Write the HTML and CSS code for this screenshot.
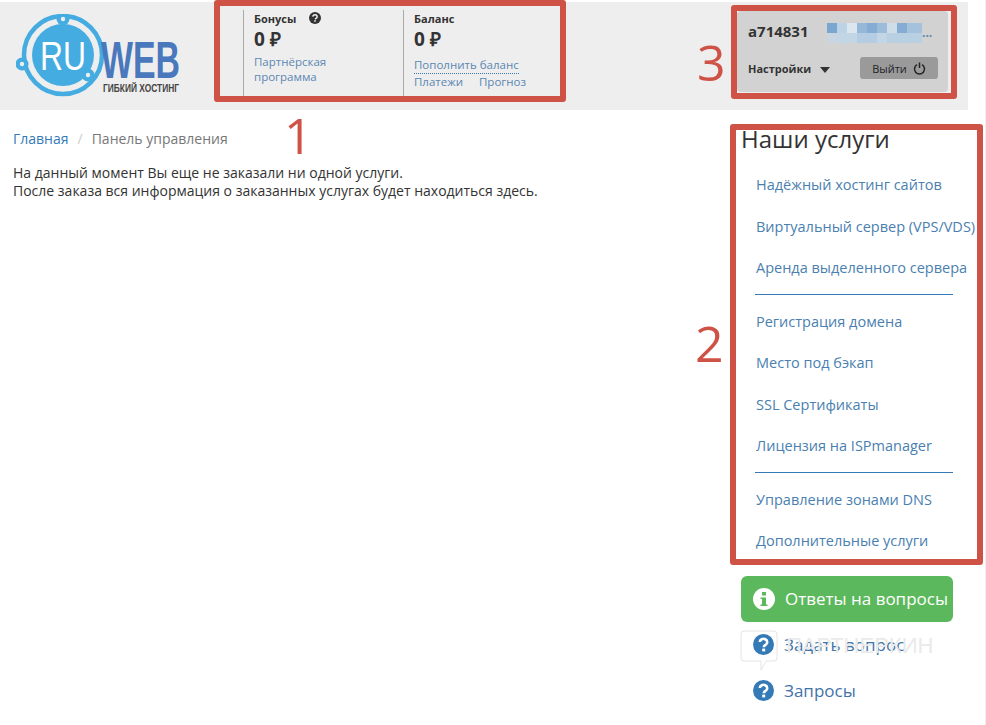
FILE: index.html
```html
<!DOCTYPE html>
<html lang="ru">

<head>
  <meta charset="UTF-8" />
  <title>Панель управления</title>
  <link rel="stylesheet" href="styles.css">
</head>

<body>
  <header class="topbar">
    <a class="logo" href="#">
      <svg width="170" height="84" viewBox="0 0 170 84">
        <circle cx="47" cy="41" r="39" fill="none" stroke="#45ace2" stroke-width="4.5" />
        <circle cx="47" cy="41" r="31" fill="#45ace2" />
        <circle cx="47" cy="5" r="6.5" fill="#45ace2" />
        <circle cx="47" cy="5" r="2.2" fill="#eee" />
        <circle cx="6" cy="50" r="6.5" fill="#45ace2" />
        <circle cx="6" cy="50" r="2.2" fill="#eee" />
        <circle cx="72" cy="61" r="6.5" fill="#45ace2" />
        <circle cx="72" cy="61" r="2.2" fill="#eee" />
        <text x="24" y="56" class="logo-ru" textLength="46" lengthAdjust="spacingAndGlyphs">RU</text>
        <text x="85" y="64" class="logo-web" textLength="79" lengthAdjust="spacingAndGlyphs">WEB</text>
        <text x="87" y="78" class="logo-sub" textLength="76" lengthAdjust="spacingAndGlyphs">ГИБКИЙ ХОСТИНГ</text>
      </svg>
    </a>

    <div class="money">
      <div class="money-col">
        <div class="money-title">Бонусы
          <svg class="hint" width="12" height="12" viewBox="0 0 12 12">
            <circle cx="6" cy="6" r="6" fill="#333" />
            <path d="M3.8 4.6a2.2 1.9 0 1 1 3.3 1.7L6 7" fill="none" stroke="#eee" stroke-width="1.5" />
            <rect x="5.2" y="8.2" width="1.6" height="1.5" fill="#eee" />
          </svg>
        </div>
        <div class="money-sum">0 ₽</div>
        <a class="money-link" href="#">Партнёрская<br>программа</a>
      </div>
      <div class="money-col">
        <div class="money-title">Баланс</div>
        <div class="money-sum">0 ₽</div>
        <a class="money-link dotted" href="#">Пополнить баланс</a>
        <div class="money-row">
          <a class="money-link" href="#">Платежи</a>
          <a class="money-link" href="#">Прогноз</a>
        </div>
      </div>
    </div>

    <div class="account">
      <div class="account-top">
        <span class="account-id">a714831</span>
        <svg class="account-blur" width="95" height="20" viewBox="0 0 95 20">
          <rect width="95" height="20" fill="#c3d6e6" />
          <rect width="10" height="10" fill="#7ba6cf" />
          <rect x="10" width="10" height="10" fill="#bcd3e6" />
          <rect x="20" width="10" height="10" fill="#dbe6ee" />
          <rect x="30" width="10" height="10" fill="#96b8d8" />
          <rect x="40" width="10" height="10" fill="#85add3" />
          <rect x="50" width="10" height="10" fill="#9dbcd9" />
          <rect x="60" width="10" height="10" fill="#cfdde9" />
          <rect x="70" width="10" height="10" fill="#85add3" />
          <rect x="80" width="15" height="10" fill="#a5c2dc" />
          <rect y="10" width="10" height="10" fill="#c9d6e2" />
          <rect x="30" y="10" width="20" height="10" fill="#b5cde2" />
          <rect x="60" y="10" width="35" height="10" fill="#b9cfe2" />
        </svg>
        <span class="account-dots">...</span>
      </div>
      <div class="account-bottom">
        <span class="account-settings">Настройки <i class="caret"></i></span>
        <a class="logout" href="#">Выйти
          <svg width="13" height="13" viewBox="0 0 13 13">
            <path d="M4 2.6a5 5 0 1 0 5 0M6.5 .5v5.5" fill="none" stroke="#222" stroke-width="1.5" />
          </svg>
        </a>
      </div>
    </div>
  </header>

  <div class="page">
    <main class="content">
      <div class="crumbs">
        <a href="#">Главная</a><span class="crumb-sep">/</span><span class="crumb-now">Панель управления</span>
      </div>
      <p class="notice">На данный момент Вы еще не заказали ни одной услуги.<br>После заказа вся информация о заказанных услугах будет находиться здесь.</p>
    </main>

    <aside class="sidebar">
      <h2>Наши услуги</h2>
      <nav class="services">
        <a href="#">Надёжный хостинг сайтов</a>
        <a href="#">Виртуальный сервер (VPS/VDS)</a>
        <a href="#">Аренда выделенного сервера</a>
        <hr>
        <a href="#">Регистрация домена</a>
        <a href="#">Место под бэкап</a>
        <a href="#">SSL Сертификаты</a>
        <a href="#">Лицензия на ISPmanager</a>
        <hr>
        <a href="#">Управление зонами DNS</a>
        <a href="#">Дополнительные услуги</a>
      </nav>
      <a class="btn-answers" href="#">
        <svg width="22" height="22" viewBox="0 0 22 22">
          <circle cx="11" cy="11" r="11" fill="#fff" />
          <rect x="9" y="4" width="4" height="3.5" fill="#5cb85c" />
          <path d="M7.5 9.5H13v7h1.5V18h-7v-1.5H9v-5.5H7.5z" fill="#5cb85c" />
        </svg>
        <span>Ответы на вопросы</span>
      </a>
      <a class="help-link" href="#">
        <svg width="21" height="21" viewBox="0 0 21 21">
          <circle cx="10.5" cy="10.5" r="10.5" fill="#337ab7" />
          <path d="M6.8 8a3.7 3.3 0 1 1 5.7 2.9c-1.2.8-1.7 1.2-1.7 2.3" fill="none" stroke="#fff" stroke-width="2.6" />
          <rect x="9.2" y="14.6" width="3" height="2.8" fill="#fff" />
        </svg>
        Задать вопрос
      </a>
      <a class="help-link" href="#">
        <svg width="21" height="21" viewBox="0 0 21 21">
          <circle cx="10.5" cy="10.5" r="10.5" fill="#337ab7" />
          <path d="M6.8 8a3.7 3.3 0 1 1 5.7 2.9c-1.2.8-1.7 1.2-1.7 2.3" fill="none" stroke="#fff" stroke-width="2.6" />
          <rect x="9.2" y="14.6" width="3" height="2.8" fill="#fff" />
        </svg>
        Запросы
      </a>
    </aside>
  </div>

  <!-- red marks drawn over the screenshot -->
  <div class="mark mark-1"></div>
  <div class="mark mark-2"></div>
  <div class="mark mark-3"></div>
  <span class="mark-num num-1">1</span>
  <span class="mark-num num-2">2</span>
  <span class="mark-num num-3">3</span>

  <div class="watermark">
    <svg width="38" height="42" viewBox="0 0 38 42">
      <path d="M4 1h30a3 3 0 0 1 3 3v24a3 3 0 0 1-3 3H26l-5 9v-9H4a3 3 0 0 1-3-3V4a3 3 0 0 1 3-3z" fill="none" stroke="#e4e4e4" />
    </svg>
    <span>ПАРТНЕРКИН</span>
  </div>
</body>

</html>
```

FILE: styles.css
```css
* {
  margin: 0;
  padding: 0;
  box-sizing: border-box;
}

html,
body {
  height: 725px;
  overflow: hidden;
}

body {
  font-family: 'Open Sans', sans-serif;
  font-size: 14px;
  color: #333;
  background-color: #fff;
  position: relative;
  padding-top: 2px;
  border-right: 1px solid #eee;
  width: 986px;
}

a {
  color: #337ab7;
  text-decoration: none;
}

.topbar {
  width: 968px;
  height: 108px;
  background-color: #eee;
  display: flex;
  align-items: flex-start;
}

.logo {
  width: 243px;
  padding: 12px 0 0 16px;
  display: block;
}

.logo svg {
  display: block;
}

.logo-ru {
  font-family: 'Liberation Sans', sans-serif;
  font-size: 40px;
  fill: #fff;
}

.logo-web {
  font-family: 'Liberation Sans', sans-serif;
  font-weight: 700;
  font-size: 52px;
  fill: #4a78bd;
}

.logo-sub {
  font-family: 'Liberation Sans', sans-serif;
  font-weight: 700;
  font-size: 10px;
  fill: #444;
}

.money {
  display: flex;
  width: 320px;
  margin-top: 8px;
}

.money-col {
  width: 160px;
  height: 86px;
  border-left: 1px solid #aaa;
  padding: 1px 0 0 10px;
}

.money-title {
  font-size: 11px;
  font-weight: 700;
  line-height: 15px;
  color: #333;
}

.hint {
  margin-left: 10px;
  vertical-align: -1px;
}

.money-sum {
  font-size: 19px;
  font-weight: 700;
  line-height: 26px;
  color: #333;
  margin-bottom: 2px;
}

.money-link {
  font-size: 11.5px;
  line-height: 15px;
  color: #5b87b3;
  display: inline-block;
}

.dotted {
  border-bottom: 1px dotted #337ab7;
  padding-bottom: 1px;
}

.money-row {
  display: flex;
  gap: 16px;
}

.account {
  width: 211px;
  height: 81px;
  margin: 9px 0 0 174px;
  background-color: #d2d2d2;
  border-radius: 4px;
  padding: 10px 10px 0 11px;
}

.account-top {
  display: flex;
  align-items: flex-start;
  height: 33px;
}

.account-id {
  font-size: 15px;
  font-weight: 700;
  line-height: 20px;
  color: #333;
  width: 79px;
}

.account-blur {
  margin-top: 2px;
}

.account-dots {
  font-size: 12px;
  font-weight: 700;
  color: #5b87b3;
  line-height: 24px;
}

.account-bottom {
  display: flex;
  align-items: center;
  justify-content: space-between;
  height: 24px;
  margin-top: 2px;
}

.account-settings {
  font-size: 11px;
  font-weight: 700;
  color: #333;
}

.caret {
  display: inline-block;
  width: 0;
  height: 0;
  border-left: 5.5px solid transparent;
  border-right: 5.5px solid transparent;
  border-top: 6px solid #333;
  margin-left: 6px;
  vertical-align: 0;
}

.logout {
  width: 78px;
  height: 22px;
  background-color: #9a9a9a;
  border-radius: 3px;
  font-size: 11px;
  color: #222;
  display: flex;
  align-items: center;
  justify-content: center;
  gap: 6px;
}

.page {
  display: flex;
}

.content {
  width: 741px;
  padding: 19px 0 0 13px;
}

.crumbs {
  font-size: 14px;
  line-height: 20px;
}

.crumb-sep {
  color: #ccc;
  margin: 0 9px;
}

.crumb-now {
  color: #777;
}

.notice {
  margin-top: 15px;
  font-size: 14px;
  line-height: 17.5px;
  color: #333;
}

.sidebar {
  width: 212px;
  position: relative;
}

.sidebar h2 {
  font-size: 24px;
  font-weight: 400;
  line-height: 30px;
  color: #333;
  margin-top: 14px;
  white-space: nowrap;
}

.services {
  width: 237px;
  overflow: hidden;
  display: flex;
  flex-direction: column;
  padding-top: 10px;
}

.services a {
  display: block;
  height: 41.5px;
  line-height: 21px;
  padding: 10px 0 0 15px;
  font-size: 14.5px;
  white-space: nowrap;
  color: #4a7fb0;
}

.services hr {
  width: 198px;
  margin: 5px 0 6px 14px;
  border: none;
  border-top: 1px solid #337ab7;
}

.btn-answers {
  display: flex;
  align-items: center;
  gap: 10px;
  width: 212px;
  height: 46px;
  margin-top: 14px;
  padding-left: 12px;
  background-color: #5cb85c;
  border-radius: 6px;
  color: #fff;
  font-size: 17px;
  overflow: hidden;
  white-space: nowrap;
}

.help-link {
  display: flex;
  align-items: center;
  gap: 10px;
  height: 46px;
  padding-left: 12px;
  font-size: 17px;
  color: #3f74a8;
}

.mark {
  position: absolute;
  border: 6px solid #cf5247;
  border-radius: 3px;
}

.mark-1 {
  left: 214px;
  top: 0;
  width: 352px;
  height: 102px;
}

.mark-2 {
  left: 730px;
  top: 124px;
  width: 253px;
  height: 441px;
}

.mark-3 {
  left: 731px;
  top: 5px;
  width: 226px;
  height: 94px;
}

.mark-num {
  position: absolute;
  font-size: 50px;
  line-height: 60px;
  color: #cf5247;
}

.num-1 {
  left: 284px;
  top: 105px;
}

.num-2 {
  left: 695px;
  top: 313px;
}

.num-3 {
  left: 697px;
  top: 32px;
}

.watermark {
  position: absolute;
  left: 740px;
  top: 630px;
  display: flex;
  gap: 8px;
  color: #eaeaea;
  font-family: 'Liberation Sans', sans-serif;
  font-size: 22px;
  line-height: 32px;
}
```
